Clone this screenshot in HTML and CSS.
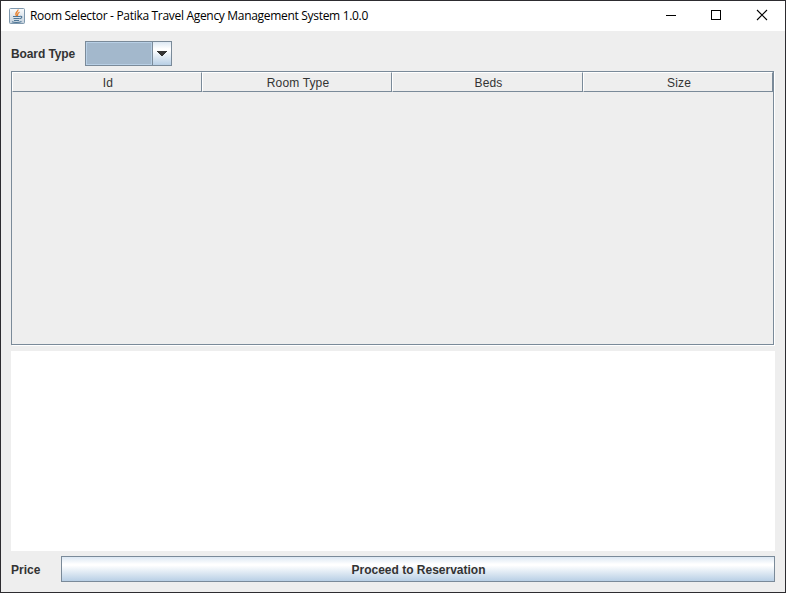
FILE: index.html
```html
<!DOCTYPE html>
<html lang="en">
<head>
<meta charset="utf-8">
<title>Room Selector</title>
<link rel="stylesheet" href="styles.css">
</head>
<body>
<div class="window">
  <header class="titlebar">
    <svg class="app-icon" width="16" height="16" viewBox="0 0 16 16">
      <defs><linearGradient id="tile" x1="0" y1="0" x2="0" y2="1"><stop offset="0" stop-color="#fbfcfd"/><stop offset="1" stop-color="#c3d0dc"/></linearGradient></defs>
      <rect x=".5" y=".5" width="15" height="15" rx="1" fill="url(#tile)" stroke="#7f98ad"/>
      <path d="M9 1.500C9.500 3.800 5 4.300 7.500 8M10.500 4C7.800 5.500 8.500 6.500 8.500 8" fill="none" stroke="#e8812e" stroke-width="1.300"/>
      <path d="M4 8.500h7M4.500 10.500h6M5 12.500h5M3 13.800c2 .9 7 .9 9.500-.3M11 8.300c2.800-.4 2.200 1.900-.2 2.400" fill="none" stroke="#4f7696" stroke-width="1.100"/>
    </svg>
    <h1 class="title">Room Selector - Patika Travel Agency Management System 1.0.0</h1>
    <div class="controls">
      <svg width="46" height="29" viewBox="0 0 46 29" shape-rendering="crispEdges"><path d="M18 14h10v1H18z"/></svg>
      <svg width="45" height="29" viewBox="0 0 45 29" shape-rendering="crispEdges"><path d="M17.500 9.500h9v9h-9z" fill="none" stroke="#000"/></svg>
      <svg width="46" height="29" viewBox="0 0 46 29"><path d="M18 9l10 10M28 9L18 19" fill="none" stroke="#000" stroke-width="1.100"/></svg>
    </div>
  </header>
  <main class="content">
    <div class="filter">
      <span class="label">Board Type</span>
      <div class="combo">
        <div class="combo-value"></div>
        <div class="combo-arrow"><svg width="10" height="5" viewBox="0 0 10 5" shape-rendering="crispEdges"><path d="M0 0h10v1H9v1H8v1H7v1H6v1H4V4H3V3H2V2H1V1H0z" fill="#333"/></svg></div>
      </div>
    </div>
    <div class="scroll">
      <div class="table-head">
        <div class="th">Id</div>
        <div class="th">Room Type</div>
        <div class="th th-wide">Beds</div>
        <div class="th">Size</div>
      </div>
    </div>
    <div class="details"></div>
    <footer class="actions">
      <span class="label price">Price</span>
      <button class="proceed">Proceed to Reservation</button>
    </footer>
  </main>
</div>
</body>
</html>
```
FILE: styles.css
```css
* { box-sizing: border-box; }
body { margin: 0; }
.window {
  width: 786px;
  height: 593px;
  border: 1px solid #2d2c30;
  background: #eee;
  color: #333;
  font: 12px "Liberation Sans", sans-serif;
  display: flex;
  flex-direction: column;
}
.titlebar {
  height: 30px;
  padding-left: 8px;
  background: #fff;
  display: flex;
  align-items: center;
}
.title {
  margin: 0 0 0 5px;
  font: 12px/16px "Open Sans", sans-serif;
  letter-spacing: -0.31px;
  color: #000;
  white-space: nowrap;
}
.controls { display: flex; height: 29px; margin: 0 0 1px auto; }
.content {
  flex: 1;
  padding: 10px;
  display: flex;
  flex-direction: column;
}
.filter { display: flex; align-items: center; height: 25px; }
.label { font-weight: bold; }
.filter .label { width: 74px; letter-spacing: -0.1px; }
.combo {
  width: 87px;
  height: 25px;
  border: 1px solid #7a8a99;
  display: flex;
}
.combo-value {
  width: 66px;
  background: #a3b8cc;
  border: 1px solid #b8cfe5;
}
.combo-arrow {
  flex: 1;
  border-left: 1px solid #7a8a99;
  display: flex;
  align-items: center;
  justify-content: center;
  padding-right: 1px;
}
.combo-arrow, .proceed {
  background: linear-gradient(#dde8f3 0%, #fff 30%, #fff 35%, #b8cfe5 100%);
}
.scroll {
  width: 763px;
  height: 274px;
  margin-top: 5px;
  border: 1px solid #7a8a99;
  box-shadow: 1px 1px #fff;
}
.table-head { display: flex; height: 20px; }
.th {
  width: 190px;
  height: 20px;
  border: 1px solid;
  border-color: #fff #7a8a99 #7a8a99 #fff;
  text-align: center;
  line-height: 20px;
  letter-spacing: 0.15px;
  padding-left: 2px;
}
.th-wide { width: 191px; }
.details { height: 200px; margin-top: 6px; background: #fff; }
.actions { display: flex; align-items: center; height: 26px; margin-top: 5px; }
.price { width: 50px; padding-top: 2px; }
.proceed {
  flex: 1;
  height: 26px;
  padding: 2px 0 0 1px;
  border: 1px solid #7a8a99;
  border-radius: 0;
  color: #333;
  font: bold 12px "Liberation Sans", sans-serif;
}
```
